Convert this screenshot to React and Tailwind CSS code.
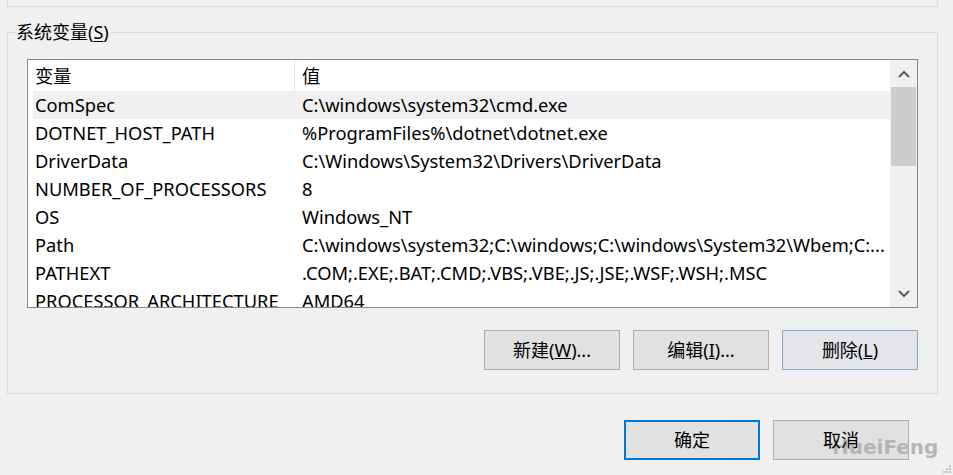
import React from "react";

const rows = [
  ["ComSpec", "C:\\windows\\system32\\cmd.exe"],
  ["DOTNET_HOST_PATH", "%ProgramFiles%\\dotnet\\dotnet.exe"],
  ["DriverData", "C:\\Windows\\System32\\Drivers\\DriverData"],
  ["NUMBER_OF_PROCESSORS", "8"],
  ["OS", "Windows_NT"],
  ["Path", "C:\\windows\\system32;C:\\windows;C:\\windows\\System32\\Wbem;C:..."],
  ["PATHEXT", ".COM;.EXE;.BAT;.CMD;.VBS;.VBE;.JS;.JSE;.WSF;.WSH;.MSC"],
  ["PROCESSOR_ARCHITECTURE", "AMD64"],
];

const Chevron = ({ up }) => (
  <svg width="12" height="8" viewBox="0 0 12 8">
    <polyline
      points={up ? "1,7 6,2 11,7" : "1,1 6,6 11,1"}
      fill="none"
      stroke="#606060"
      strokeWidth="2"
    />
  </svg>
);

const Btn = ({ children, className = "" }) => (
  <button
    className={`w-[136px] h-[40px] flex items-center justify-center text-[18px] text-black ${className}`}
  >
    <span className="relative z-10">{children}</span>
  </button>
);

export default function App() {
  return (
    <div className="relative w-[953px] h-[475px] overflow-hidden bg-[#f0f0f0] text-black font-['Noto_Sans','Noto_Sans_CJK_SC',sans-serif]">
      {/* bottom edge of the group above */}
      <div className="ml-[7px] w-[931px] h-[7px] border-x border-b border-[#dcdcdc]" />

      {/* 系统变量 group */}
      <div className="relative ml-[7px] mt-[25px] w-[931px] h-[362px] border border-[#dcdcdc] pt-[26px] pl-[19px]">
        <span className="absolute left-[8px] top-[-11px] bg-[#f0f0f0] pr-[2px] text-[18px] leading-[20px]">
          系统变量(<span className="underline underline-offset-2">S</span>)
        </span>

        <div className="w-[891px] h-[249px] border border-[#828790] bg-white flex">
          <div className="flex-1 overflow-hidden text-[18.3px]">
            <div className="h-[31px] flex items-center">
              <div className="w-[266px] pl-[7px]">变量</div>
              <div className="w-px h-[31px] bg-[#e5e5e5]" />
              <div className="pl-[7px]">值</div>
            </div>
            {rows.map(([name, value], i) => (
              <div
                key={name}
                className={`ml-[5px] h-[28px] flex items-center whitespace-nowrap ${i === 0 ? "bg-[#f0f0f0]" : ""}`}
              >
                <div className="w-[256px] pl-[2px] overflow-hidden">{name}</div>
                <div className="pl-[13px]">{value}</div>
              </div>
            ))}
          </div>

          {/* scrollbar */}
          <div className="w-[27px] bg-[#f0f0f0] flex flex-col">
            <div className="h-[27px] flex items-center justify-center">
              <Chevron up />
            </div>
            <div className="mx-[1px] h-[79px] bg-[#cdcdcd]" />
            <div className="flex-1" />
            <div className="h-[27px] flex items-center justify-center">
              <Chevron />
            </div>
          </div>
        </div>

        <div className="w-[891px] mt-[22px] flex justify-end gap-[13px]">
          <Btn className="bg-[#e1e1e1] border border-[#adadad]">
            新建(<span className="underline underline-offset-1">W</span>)...
          </Btn>
          <Btn className="bg-[#e1e1e1] border border-[#adadad]">
            编辑(<span className="underline underline-offset-1">I</span>)...
          </Btn>
          <Btn className="bg-[#e3e5e8] border border-[#8aa6c4]">
            删除(<span className="underline underline-offset-1">L</span>)
          </Btn>
        </div>
      </div>

      <div className="ml-[624px] mt-[26px] flex gap-[13px]">
        <Btn className="bg-[#e1e1e1] border-2 border-[#0078d7]">确定</Btn>
        <Btn className="bg-[#e1e1e1] border border-[#adadad]">取消</Btn>
      </div>

      {/* watermark */}
      <span className="absolute left-[832px] top-[437px] z-[5] text-[20px] leading-none font-bold text-[#b5b5b5] font-['DejaVu_Sans',sans-serif] pointer-events-none">
        HueiFeng
      </span>

      {/* resize grip */}
      <svg className="absolute right-[2px] bottom-[2px]" width="8" height="8" viewBox="0 0 8 8">
        <rect x="6" y="0" width="2" height="2" fill="#c4c4c4" />
        <rect x="3" y="3" width="2" height="2" fill="#c4c4c4" />
        <rect x="6" y="3" width="2" height="2" fill="#c4c4c4" />
        <rect x="0" y="6" width="2" height="2" fill="#c4c4c4" />
        <rect x="3" y="6" width="2" height="2" fill="#c4c4c4" />
        <rect x="6" y="6" width="2" height="2" fill="#c4c4c4" />
      </svg>
    </div>
  );
}
